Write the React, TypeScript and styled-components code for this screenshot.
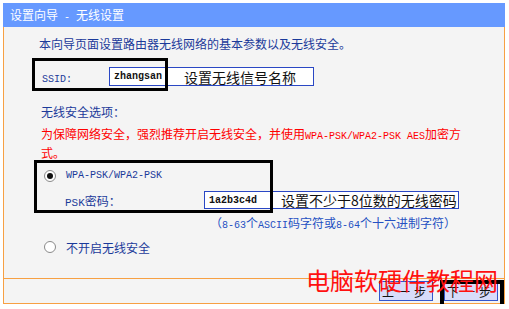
import * as React from 'react';
import styled, { createGlobalStyle } from 'styled-components';

const GlobalStyle = createGlobalStyle`
  html, body {
    margin: 0;
    padding: 0;
    background: #ffffff;
    overflow: hidden;
  }
  body {
    font-family: "Noto Sans CJK SC", "Liberation Sans", sans-serif;
    font-size: 12px;
  }
`;

const blue = '#1b3a9a';
const orange = '#f7a043';

const Frame = styled.div`
  position: relative;
  width: 502px;
  margin: 3px 0 0 3px;
`;

const Header = styled.div`
  height: 24px;
  line-height: 24px;
  padding-left: 7px;
  background: #6699ff;
  color: #ffffff;
  font-size: 12px;
`;

const Body = styled.div`
  height: 252px;
  padding: 10px 0 0 36px;
  box-sizing: border-box;
  background: #f4f4f4;
  border-left: 1px solid ${orange};
  border-right: 1px solid ${orange};
  border-bottom: 1px solid ${orange};
  color: ${blue};
`;

const Line = styled.div<{ $top?: number; $indent?: number }>`
  height: 14px;
  line-height: 14px;
  margin-top: ${(p) => p.$top ?? 0}px;
  margin-left: ${(p) => p.$indent ?? 0}px;
  white-space: nowrap;
`;

const Warning = styled.div`
  width: 426px;
  margin: 5px 0 0 1px;
  line-height: 19px;
  color: #ff0000;
`;

const Latin = styled.span<{ $size?: number }>`
  font-family: "Liberation Mono", monospace;
  font-size: ${(p) => p.$size ?? 10}px;
  line-height: 1;
  white-space: pre;
`;

const Row = styled.div<{ $top: number; $height: number }>`
  position: relative;
  display: flex;
  align-items: center;
  height: ${(p) => p.$height}px;
  margin-top: ${(p) => p.$top}px;
`;

const Label = styled.div<{ $width: number; $indent?: number }>`
  width: ${(p) => p.$width}px;
  margin-left: ${(p) => p.$indent ?? 0}px;
  flex-shrink: 0;
  color: ${blue};
`;

const Field = styled.div<{ $width: number }>`
  display: flex;
  align-items: center;
  width: ${(p) => p.$width}px;
  height: 100%;
  box-sizing: border-box;
  border: 1px solid #2a47c4;
  background: #ffffff;
`;

const Value = styled.span<{ $width: number }>`
  width: ${(p) => p.$width}px;
  padding-left: 4px;
  flex-shrink: 0;
  font-family: "Liberation Mono", monospace;
  font-size: 10px;
  font-weight: bold;
  color: #111111;
`;

const Note = styled.span`
  font-size: 14px;
  color: #111111;
  white-space: nowrap;
`;

const Highlight = styled.div<{ $left: number; $top: number; $w: number; $h: number; $border?: number }>`
  position: absolute;
  left: ${(p) => p.$left}px;
  top: ${(p) => p.$top}px;
  width: ${(p) => p.$w}px;
  height: ${(p) => p.$h}px;
  box-sizing: border-box;
  border: ${(p) => p.$border ?? 3}px solid #000000;
  pointer-events: none;
`;

const Group = styled.div`
  position: relative;
  margin-top: 6px;
`;

const Radio = styled.span<{ $checked?: boolean }>`
  position: relative;
  width: 12px;
  height: 12px;
  margin: 0 10px 0 4px;
  box-sizing: border-box;
  border: 1px solid #8a8a8a;
  border-radius: 50%;
  background: #ffffff;
  flex-shrink: 0;

  &::after {
    content: '';
    display: ${(p) => (p.$checked ? 'block' : 'none')};
    position: absolute;
    left: 2px;
    top: 2px;
    width: 6px;
    height: 6px;
    border-radius: 50%;
    background: #111111;
  }
`;

const Hint = styled.div`
  margin: 7px 0 0 170px;
  height: 14px;
  line-height: 14px;
  color: #2450c2;
  white-space: nowrap;
`;

const Footer = styled.div`
  position: relative;
  display: flex;
  justify-content: flex-end;
  gap: 11px;
  height: 25px;
  padding: 2px 6px 0 0;
  box-sizing: border-box;
  background: #f4f4f4;
  border-left: 1px solid ${orange};
  border-right: 1px solid ${orange};
  border-bottom: 1px solid ${orange};
`;

const ButtonSlot = styled.div`
  position: relative;
`;

const Button = styled.button`
  width: 54px;
  height: 20px;
  padding: 0;
  background: #d8dcfa;
  border: 1px solid #3355cc;
  font-family: "Noto Sans CJK SC", sans-serif;
  font-size: 12px;
  color: #111111;
  letter-spacing: 4px;
`;

const Watermark = styled.div`
  position: absolute;
  left: 303px;
  top: 262px;
  font-family: "Noto Sans CJK SC", sans-serif;
  font-size: 24px;
  line-height: 30px;
  color: #ff1010;
  white-space: nowrap;
  pointer-events: none;
`;

export default function App() {
  return (
    <>
      <GlobalStyle />
      <Frame>
        <Header>
          设置向导<Latin> - </Latin>无线设置
        </Header>
        <Body>
          <Line $indent={-1}>本向导页面设置路由器无线网络的基本参数以及无线安全。</Line>

          <Row $top={16} $height={19}>
            <Label $width={67} $indent={2}>
              <Latin>SSID:</Latin>
            </Label>
            <Field $width={205}>
              <Value $width={70}>zhangsan</Value>
              <Note>设置无线信号名称</Note>
            </Field>
            <Highlight $left={-8} $top={-9} $w={136} $h={33} />
          </Row>

          <Line $top={19} $indent={1}>无线安全选项：</Line>
          <Warning>
            为保障网络安全，强烈推荐开启无线安全，并使用<Latin>WPA-PSK/WPA2-PSK AES</Latin>加密方式。
          </Warning>

          <Group>
            <Row $top={0} $height={16}>
              <Radio $checked />
              <Latin>WPA-PSK/WPA2-PSK</Latin>
            </Row>
            <Row $top={7} $height={18}>
              <Label $width={139} $indent={25}>
                <Latin $size={11}>PSK</Latin>密码：
              </Label>
              <Field $width={255}>
                <Value $width={72}>1a2b3c4d</Value>
                <Note>设置不少于8位数的无线密码</Note>
              </Field>
            </Row>
            <Highlight $left={-6} $top={-8} $w={239} $h={53} />
          </Group>

          <Hint>
            （<Latin>8-63</Latin>个<Latin>ASCII</Latin>码字符或<Latin>8-64</Latin>个十六进制字符）
          </Hint>

          <Row $top={9} $height={16}>
            <Radio />
            <span>不开启无线安全</span>
          </Row>
        </Body>
        <Footer>
          <ButtonSlot>
            <Button>上一步</Button>
          </ButtonSlot>
          <ButtonSlot>
            <Button>下一步</Button>
            <Highlight $left={-4} $top={-1} $w={64} $h={30} $border={4} />
          </ButtonSlot>
        </Footer>
        <Watermark>电脑软硬件教程网</Watermark>
      </Frame>
    </>
  );
}
